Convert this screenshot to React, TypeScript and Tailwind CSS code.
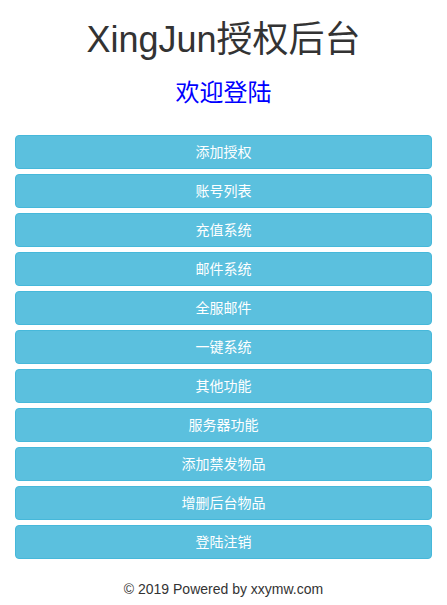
import React from 'react';

const menu = [
  '添加授权',
  '账号列表',
  '充值系统',
  '邮件系统',
  '全服邮件',
  '一键系统',
  '其他功能',
  '服务器功能',
  '添加禁发物品',
  '增删后台物品',
  '登陆注销',
];

const App = () => {
  return (
    <div
      className="min-h-screen bg-white px-[15px] text-[#333] text-sm"
      style={{ fontFamily: '"Liberation Sans", "Noto Sans CJK SC", sans-serif' }}
    >
      <h1 className="pt-5 text-center text-[36px] leading-[1.1]">XingJun授权后台</h1>
      <h2 className="mt-5 text-center text-[24px] leading-[1.1] text-[#0000ff]">欢迎登陆</h2>

      <div className="mt-[29px] flex flex-col gap-[5px]">
        {menu.map((item) => (
          <button
            key={item}
            className="h-[34px] w-full rounded border border-[#46b8da] bg-[#5bc0de] text-sm text-white"
          >
            {item}
          </button>
        ))}
      </div>

      <footer className="mt-5 text-center leading-5">© 2019 Powered by xxymw.com</footer>
    </div>
  );
};

export default App;
